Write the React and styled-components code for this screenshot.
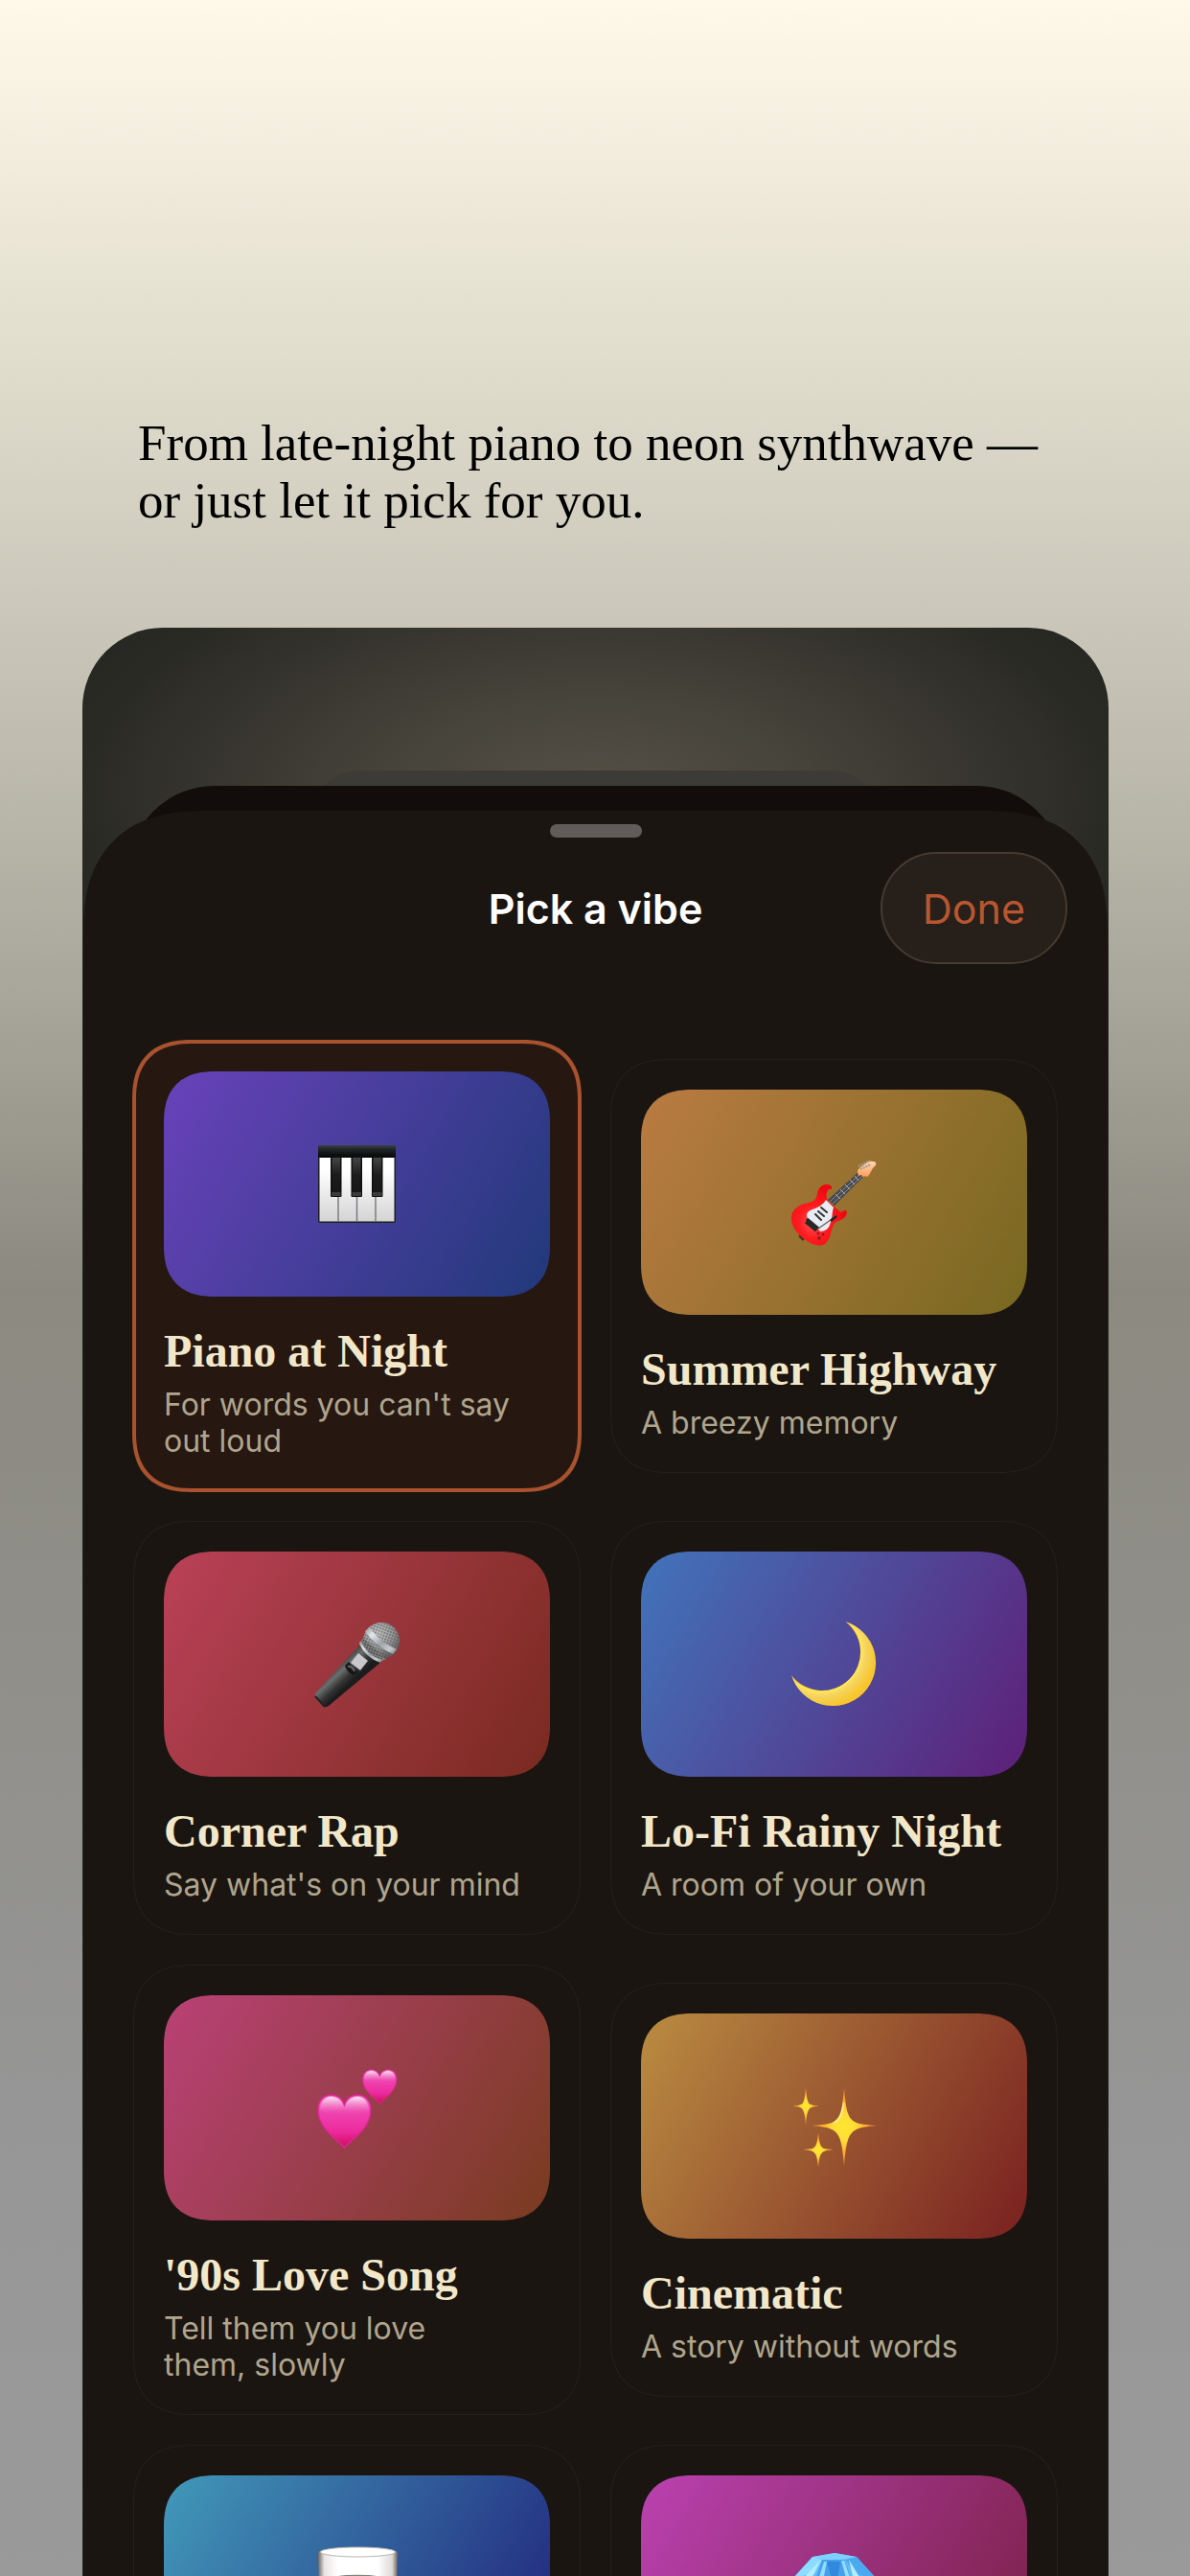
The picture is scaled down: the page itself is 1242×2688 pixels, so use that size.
import React, { useState } from 'react';
import styled, { createGlobalStyle, css } from 'styled-components';

const PianoIcon = () => (
  <Icon viewBox="0 0 90 90" aria-hidden="true">
    <defs>
      <linearGradient id="keys" x1="0" y1="0" x2="0" y2="1">
        <stop offset="0.2" stopColor="#ffffff" />
        <stop offset="1" stopColor="#d4d4d4" />
      </linearGradient>
      <linearGradient id="lid" x1="0" y1="0" x2="0" y2="1">
        <stop offset="0" stopColor="#3c4347" />
        <stop offset="0.3" stopColor="#22272a" />
        <stop offset="1" stopColor="#050505" />
      </linearGradient>
      <linearGradient id="sharp" x1="0" y1="0" x2="0" y2="1">
        <stop offset="0" stopColor="#454545" />
        <stop offset="0.5" stopColor="#1c1c1c" />
        <stop offset="1" stopColor="#161616" />
      </linearGradient>
    </defs>
    <rect x="4" y="4" width="81" height="81" rx="2" fill="#1c1c20" />
    <rect x="5.5" y="16" width="78" height="67.5" fill="url(#keys)" />
    <path d="M25 56v27.5M44.5 56v27.5M64 56v27.5" stroke="#77777a" strokeWidth="1.4" />
    <rect x="4" y="4" width="81" height="13" rx="2" fill="url(#lid)" />
    {[17, 38.5, 60].map(x => (
      <g key={x}>
        <rect x={x} y="13" width="11.5" height="45" rx="1" fill="#0e0e0e" />
        <rect x={x + 1.5} y="17" width="8.5" height="36" fill="url(#sharp)" />
        <rect x={x + 1} y="53" width="9.5" height="4" fill="#3b3b3b" />
      </g>
    ))}
  </Icon>
);

const GuitarIcon = () => (
  <Icon viewBox="0 0 90 90" aria-hidden="true">
    <defs>
      <radialGradient id="guitar" cx="0.4" cy="0.62" r="0.6">
        <stop offset="0" stopColor="#ff5656" />
        <stop offset="0.45" stopColor="#ff1c20" />
        <stop offset="1" stopColor="#f0060e" />
      </radialGradient>
      <linearGradient id="headstock" x1="0" y1="0" x2="0" y2="1">
        <stop offset="0" stopColor="#ffd9b5" />
        <stop offset="1" stopColor="#ff9c56" />
      </linearGradient>
    </defs>
    <path d="M9 80l3 3" stroke="#4a3524" strokeWidth="3" strokeLinecap="round" />
    <path d="M42 31c-2-1-4 0-5 3s-1 6 2 10l11 10c2 2 4-1 6-1 3 0 2 5-1 8-4 3-9 3-11 7-3 6-3 14-8 19-4 4-11 3-18-1C9 80 1 73 0 63c-1-9 6-15 14-17 5-1 9-2 11-5 3-4 1-9 6-13 4-3 9-2 11 0z" fill="url(#guitar)" />
    <path d="M16 58c0-3 3-5 6-6 6-2 11-5 14-10l8 8c-2 6-1 12-4 18-1 4-5 7-10 7-3-6-14-9-14-17z" fill="#e9edf2" />
    <path d="M38 42L70 13l5 5-30 30z" fill="#45484c" />
    <path d="M40 44L73 14M43 46L74 17" stroke="#9a9da0" strokeWidth="0.8" />
    <path d="M46 36l5 5M51 31l5 5M56 26l5 5M61 21l5 5M66 17l4 5" stroke="#c5c8ca" strokeWidth="0.8" />
    <path d="M69 13c0-3 3-5 6-7 3-3 7-5 10-4 4 0 4 3 2 5-4 3-4 8-8 11l-2-1-2 1-2-2-3 1z" fill="url(#headstock)" />
    <path d="M70 7l12-6M72 10l11-5" stroke="#a39c91" strokeWidth="2" strokeDasharray="2 1" />
    <path d="M31 50l6 5M28 54l6 5M25 57l6 6" stroke="#333333" strokeWidth="2" strokeLinecap="round" />
    <path d="M16 62l12 10M15 65l11 9" stroke="#282828" strokeWidth="3.5" />
    <path d="M28 72l13-9 5-5" stroke="#666666" strokeWidth="1.5" fill="none" />
    <path d="M41 64l6-5" stroke="#222222" strokeWidth="2.5" />
    <circle cx="28" cy="77" r="1.5" fill="#9d1518" />
    <circle cx="33" cy="78" r="1.5" fill="#9d1518" />
    <circle cx="29" cy="82" r="1.8" fill="#742727" />
  </Icon>
);

const MicIcon = () => (
  <Icon viewBox="0 0 90 90" aria-hidden="true">
    <defs>
      <linearGradient id="handle" x1="0.3" y1="0.35" x2="0.55" y2="0.6">
        <stop offset="0" stopColor="#3b3b3b" />
        <stop offset="0.35" stopColor="#6b6e6d" />
        <stop offset="0.7" stopColor="#353535" />
        <stop offset="1" stopColor="#1c1c1c" />
      </linearGradient>
      <radialGradient id="grille" cx="0.4" cy="0.3" r="0.7">
        <stop offset="0" stopColor="#c8c8c8" />
        <stop offset="0.6" stopColor="#9a9a9a" />
        <stop offset="1" stopColor="#636363" />
      </radialGradient>
      <pattern id="mesh" width="3" height="3" patternUnits="userSpaceOnUse" patternTransform="rotate(20)">
        <circle cx="1" cy="1" r="0.8" fill="#3a3a3a" />
      </pattern>
      <linearGradient id="band" x1="0" y1="0" x2="1" y2="1">
        <stop offset="0" stopColor="#8a8c90" />
        <stop offset="0.25" stopColor="#e4e8ee" />
        <stop offset="0.55" stopColor="#9fa2a7" />
        <stop offset="0.8" stopColor="#c8ccd0" />
        <stop offset="1" stopColor="#777777" />
      </linearGradient>
    </defs>
    <path d="M48 24L1 75c-1 2 0 4 1 5l7 8c2 2 5 1 6 0l55-46z" fill="url(#handle)" />
    <path d="M1 78l10 11" stroke="#222222" strokeWidth="2" />
    <circle cx="70" cy="20" r="19" fill="url(#grille)" />
    <path d="M51 17l-3 6c4 9 11 16 21 19l6-3z" fill="#858585" />
    <circle cx="70" cy="20" r="19" fill="url(#mesh)" />
    <path d="M51 18l-2 5c4 8 11 15 20 18l6-3z" fill="url(#mesh)" />
    <path d="M53 10c7 10 17 18 29 24l4-5C74 24 64 16 58 6z" fill="url(#band)" />
    <path d="M48 20c4 9 12 17 23 20l-2 3c-11-4-18-11-22-20z" fill="url(#band)" />
    <path d="M36 42l9 11-4 3c-4-1-8-6-9-10z" fill="#161616" />
    <path d="M46 33l10 8-8 10-10-8z" fill="#c9c9cd" />
    <path d="M35 47c3-1 5 1 7 5" stroke="#6c6c6c" strokeWidth="2" fill="none" />
  </Icon>
);

const MoonIcon = () => (
  <Icon viewBox="0 0 90 90" aria-hidden="true">
    <defs>
      <radialGradient id="moon" gradientUnits="userSpaceOnUse" cx="31" cy="31" r="58">
        <stop offset="0.68" stopColor="#f3a712" />
        <stop offset="0.72" stopColor="#ffe75c" />
        <stop offset="0.8" stopColor="#f4d560" />
        <stop offset="1" stopColor="#f8c52c" />
      </radialGradient>
    </defs>
    <path d="M56 0A45 45 0 1 1 0 56A40 40 0 1 0 56 0z" fill="url(#moon)" />
  </Icon>
);

const HeartsIcon = () => (
  <Icon viewBox="0 0 90 90" aria-hidden="true">
    <defs>
      <linearGradient id="heart" x1="0" y1="0" x2="0" y2="1">
        <stop offset="0" stopColor="#f27cc6" />
        <stop offset="0.3" stopColor="#ef45b0" />
        <stop offset="0.7" stopColor="#ec2a9d" />
        <stop offset="1" stopColor="#cf0c5e" />
      </linearGradient>
      <linearGradient id="gloss" x1="0" y1="0" x2="0" y2="1">
        <stop offset="0" stopColor="#ffffff" stopOpacity="0.8" />
        <stop offset="1" stopColor="#f06cc0" stopOpacity="0" />
      </linearGradient>
      <g id="love">
        <path d="M29 57C22 49 1 37 1 17C1 7 7 1 15 1c7 0 12 4 14 11C31 5 36 1 43 1c8 0 14 6 14 16C57 37 36 49 29 57z" fill="url(#heart)" stroke="#e32299" strokeWidth="1.4" />
        <path d="M3 18C3 9 8 3 15 3c7 0 12 5 14 11C31 8 36 3 43 3c7 0 12 6 12 15c0 5-50 5-52 0z" fill="url(#gloss)" />
      </g>
    </defs>
    <use href="#love" transform="translate(3 30) scale(0.98)" />
    <use href="#love" transform="translate(50 4) scale(0.63)" />
  </Icon>
);

const SparklesIcon = () => (
  <Icon viewBox="0 0 90 90" aria-hidden="true">
    <defs>
      <radialGradient id="spark">
        <stop offset="0" stopColor="#ffe62e" />
        <stop offset="0.35" stopColor="#ffdc38" />
        <stop offset="0.65" stopColor="#ffae2c" />
        <stop offset="1" stopColor="#f08a3c" />
      </radialGradient>
    </defs>
    <g fill="url(#spark)">
      <path d="M55 5C57 29 59 36 66 40c5 3 12 3 23 4c-11 1-18 2-23 5c-7 5-9 13-11 37C53 62 51 54 44 49c-5-3-12-4-23-5c11-1 18-1 23-4c7-4 9-11 11-35z" />
      <path d="M15 4c1 12 2 17 5 18 2 1 5 1 9 1.500-4 .5-7 1-9 2-3 2-4 6-5 18-1-12-2-16-5-18-2-1-5-1.500-9-2 4-.5 7-.5 9-1.500 3-1 4-6 5-18z" />
      <path d="M28 51c1 11 2 15 6 17 2 .5 6 .5 10 1-4 .5-8 1-10 2-4 2-5 6-6 17-1-11-2-15-6-17-2-1-6-1.500-10-2 4-.5 8-.5 10-1 4-2 5-6 6-17z" />
    </g>
    <path d="M54.500 20c-1 12-4 18-10 21" stroke="#fff6c4" strokeWidth="1.500" fill="none" opacity="0.8" />
  </Icon>
);

const GlassIcon = () => (
  <Icon viewBox="0 0 90 90" aria-hidden="true">
    <defs>
      <linearGradient id="glass" x1="0" y1="0" x2="1" y2="0">
        <stop offset="0" stopColor="#6f6761" />
        <stop offset="0.08" stopColor="#e8e6e4" />
        <stop offset="0.25" stopColor="#ffffff" />
        <stop offset="0.75" stopColor="#ffffff" />
        <stop offset="0.93" stopColor="#dedad8" />
        <stop offset="1" stopColor="#6b625c" />
      </linearGradient>
    </defs>
    <path d="M4 8c0-8 83-8 83 0l-2 74c-1 7-78 7-79 0z" fill="url(#glass)" />
    <ellipse cx="45.500" cy="7" rx="39" ry="5" fill="#ffffff" stroke="#bbb7b3" strokeWidth="1" />
    <path d="M24 33c8-2 34-2 42 0" stroke="#85807c" strokeWidth="1.500" fill="none" />
  </Icon>
);

const GemIcon = () => (
  <Icon viewBox="0 0 90 90" aria-hidden="true">
    <path d="M22 12L45 8l23 4 19 21-42 50L3 33z" fill="#62bcf8" />
    <path d="M22 12L45 8l23 4-16 3H32z" fill="#7fd0fb" />
    <path d="M22 12L3 33l21-3 8-15z" fill="#8bdcff" />
    <path d="M32 15h23l7 18-17 50-19-50z" fill="#459fe9" />
    <path d="M37 17h14l-3 18-6-1z" fill="#3089dc" />
    <path d="M68 12l19 21-19-2-12-16z" fill="#4ba9f0" />
    <path d="M30 15l-8 18-8 0 16-18zM60 15l4 17 7 1-11-18z" fill="#b4ebff" />
    <path d="M52 16l5 18 4-1-6-17zM34 17l-5 16 5-1 3-15z" fill="#93dcff" />
  </Icon>
);

const vibes = [
  { id: 'piano', name: 'Piano at Night', note: "For words you can't say\nout loud", from: '#6942ba', to: '#21397a', icon: PianoIcon },
  { id: 'highway', name: 'Summer Highway', note: 'A breezy memory', from: '#ba7b41', to: '#776820', icon: GuitarIcon },
  { id: 'rap', name: 'Corner Rap', note: "Say what's on your mind", from: '#ba4157', to: '#792a20', icon: MicIcon },
  { id: 'lofi', name: 'Lo-Fi Rainy Night', note: 'A room of your own', from: '#4174bb', to: '#5e1f78', icon: MoonIcon },
  { id: 'love', name: "'90s Love Song", note: 'Tell them you love\nthem, slowly', from: '#ba4176', to: '#793b20', icon: HeartsIcon },
  { id: 'cinematic', name: 'Cinematic', note: 'A story without words', from: '#ba8c41', to: '#792020', icon: SparklesIcon },
  { id: 'glass', from: '#4199ba', to: '#20207a', icon: GlassIcon },
  { id: 'gem', from: '#ba41b0', to: '#792045', icon: GemIcon },
];

const VibeCard = ({ vibe, selected, onSelect }) => {
  const Drawing = vibe.icon;
  return (
    <Card type="button" $selected={selected} aria-pressed={selected} onClick={onSelect}>
      <Cover $from={vibe.from} $to={vibe.to}><Drawing /></Cover>
      {vibe.name && <Name>{vibe.name}</Name>}
      {vibe.note && <Note>{vibe.note}</Note>}
    </Card>
  );
};

const App = () => {
  const [picked, setPicked] = useState('piano');

  return (
    <Page>
      <GlobalStyle />
      <Tagline>From late-night piano to neon synthwave — or just let it pick for you.</Tagline>
      <Phone>
        <FarSheet />
        <BackSheet />
        <Sheet>
          <Grabber />
          <Header>
            <Title>Pick a vibe</Title>
            <Done type="button">Done</Done>
          </Header>
          <Grid>
            {vibes.map(vibe => (
              <VibeCard
                key={vibe.id}
                vibe={vibe}
                selected={vibe.id === picked}
                onSelect={() => setPicked(vibe.id)}
              />
            ))}
          </Grid>
        </Sheet>
      </Phone>
    </Page>
  );
};

export default App;


const GlobalStyle = createGlobalStyle`
  * {
    box-sizing: border-box;
  }
  body {
    margin: 0;
    font-family: Inter, "Liberation Sans", sans-serif;
  }
  button {
    font: inherit;
    cursor: pointer;
  }
`;

// continuous corners where the browser has them, plain round ones elsewhere
const smooth = (plain, wide) => css`
  border-radius: ${plain}px;
  @supports (corner-shape: superellipse(1.3)) {
    border-radius: ${wide}px;
    corner-shape: superellipse(1.3);
  }
`;

const Page = styled.main`
  display: flex;
  flex-direction: column;
  height: 100vh;
  overflow: hidden;
  padding: 0 85px 0 86px;
  background: linear-gradient(
    #fff9ea 0%,
    #dedbcb 15%,
    #c8c4b8 25%,
    #aaa89c 38%,
    #8c8a80 50%,
    #8f8e88 62%,
    #969696 82%,
    #9a9a9a 100%
  );
`;

const Tagline = styled.h1`
  margin: 0;
  padding: 432px 58px 103px;
  font-family: "Liberation Serif", serif;
  font-size: 53px;
  font-weight: 400;
  line-height: 60px;
  color: #000000;
`;

const Phone = styled.section`
  display: flex;
  flex: 1 0 auto;
  flex-direction: column;
  padding-top: 149px;
  border-radius: 84px 84px 0 0;
  overflow: hidden;
  background: radial-gradient(600px 290px at 50% 175px, #545046 0%, #47443b 35%, #36342e 68%, #2a2a25 90%, #232420 110%);
`;

const FarSheet = styled.div`
  flex: none;
  height: 60px;
  margin: 0 239px;
  border-radius: 50px 50px 0 0;
  background: #3c3b36;
`;

const BackSheet = styled.div`
  flex: none;
  height: 100px;
  margin: -44px 48px 0;
  border-radius: 90px 90px 0 0;
  background: #120d0a;
`;

const Sheet = styled.div`
  display: flex;
  flex: 1 0 auto;
  flex-direction: column;
  margin: -74px 1px 0;
  padding-top: 14px;
  ${smooth(108, 128)}
  border-bottom-left-radius: 0;
  border-bottom-right-radius: 0;
  background: #1a1511;
`;

const Grabber = styled.div`
  align-self: center;
  width: 96px;
  height: 14px;
  border-radius: 7px;
  background: #615c59;
`;

const Header = styled.header`
  display: grid;
  grid-template-columns: 1fr auto 1fr;
  align-items: center;
  margin-top: 15px;
  padding: 0 42px;
`;

const Title = styled.h2`
  grid-column: 2;
  margin: 0;
  font-size: 43px;
  font-weight: 600;
  line-height: 52px;
  color: #ffffff;
`;

const Done = styled.button`
  justify-self: end;
  height: 117px;
  padding: 0 42px;
  border: 2px solid #453b2e;
  border-radius: 59px;
  background: #261f1a;
  font-size: 43px;
  color: #b8562f;
`;

const Grid = styled.div`
  display: grid;
  grid-template-columns: 1fr 1fr;
  align-items: center;
  gap: 31px;
  padding: 80px 52px 0;
`;

const Card = styled.button`
  display: flex;
  flex-direction: column;
  padding: 31px 31px 32px;
  border: 1px solid #24201c;
  ${smooth(50, 62)}
  background: #1a1511;
  text-align: left;
  ${({ $selected }) => $selected && css`
    border-color: #a9522e;
    background: #261711;
    outline: 4px solid #a9522e;
    outline-offset: -3px;
  `}
`;

const Cover = styled.span`
  display: flex;
  align-items: center;
  justify-content: center;
  width: 100%;
  height: 235px;
  ${smooth(42, 54)}
  background: linear-gradient(120deg, ${props => props.$from}, ${props => props.$to});
`;

const Icon = styled.svg`
  width: 90px;
  height: 90px;
`;

const Name = styled.span`
  margin-top: 30px;
  font-family: "Liberation Serif", serif;
  font-size: 48px;
  font-weight: 700;
  line-height: 54px;
  white-space: nowrap;
  color: #f2e7c9;
`;

const Note = styled.span`
  margin-top: 10px;
  font-size: 32px;
  line-height: 38px;
  white-space: pre-line;
  color: #b0a58d;
`;
